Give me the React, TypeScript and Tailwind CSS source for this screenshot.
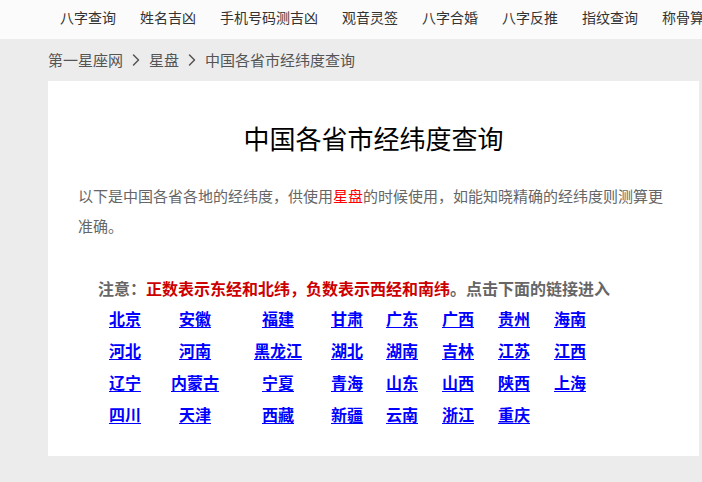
import React from "react";

const nav = ["八字查询", "姓名吉凶", "手机号码测吉凶", "观音灵签", "八字合婚", "八字反推", "指纹查询", "称骨算命", "生肖配对"];

const rows = [
  ["北京", "安徽", "福建", "甘肃", "广东", "广西", "贵州", "海南"],
  ["河北", "河南", "黑龙江", "湖北", "湖南", "吉林", "江苏", "江西"],
  ["辽宁", "内蒙古", "宁夏", "青海", "山东", "山西", "陕西", "上海"],
  ["四川", "天津", "西藏", "新疆", "云南", "浙江", "重庆", ""],
];

function Chevron() {
  return (
    <svg width="20" height="20" viewBox="0 0 24 24" fill="none" stroke="#555" strokeWidth="1.8" strokeLinecap="round" strokeLinejoin="round" className="mx-[3px]">
      <path d="m9 18 6-6-6-6" />
    </svg>
  );
}

export default function App() {
  return (
    <div
      className="min-h-[482px] w-[702px] overflow-hidden bg-[#ececec]"
      style={{ fontFamily: '"Noto Sans CJK SC", "Noto Sans", sans-serif' }}
    >
      <div className="h-[39px] bg-[#fbfbfb] overflow-hidden">
        <div className="flex pl-[48px] whitespace-nowrap text-[14px] leading-[35px] text-[#333]">
          {nav.map((n) => (
            <span key={n} className="px-3 shrink-0">{n}</span>
          ))}
        </div>
      </div>
      <div className="h-[42px] flex items-center pl-[48px] text-[15px] text-[#555]">
        <span>第一星座网</span>
        <Chevron />
        <span>星盘</span>
        <Chevron />
        <span>中国各省市经纬度查询</span>
      </div>
      <div className="ml-[48px] w-[651px] h-[375px] bg-white px-[30px] pt-[37px]">
        <h1 className="text-center text-[26px] leading-[40px] text-black">中国各省市经纬度查询</h1>
        <p className="mt-[23px] text-[15px] leading-[30px] text-[#666]">
          以下是中国各省各地的经纬度，供使用<span className="text-[#ff0000]">星盘</span>的时候使用，如能知晓精确的经纬度则测算更准确。
        </p>
        <div className="mt-[31px] pl-[20px] text-[16px] leading-[32px] font-bold text-[#666]">
          注意：<span className="text-[#cc0000]">正数表示东经和北纬，负数表示西经和南纬</span>。点击下面的链接进入
        </div>
        <div className="ml-[18px] -mt-[2px] grid grid-cols-[58px_82px_84px_54px_56px_56px_56px_56px] text-[16px] leading-[32px] font-bold">
          {rows.flat().map((c, i) => (
            <div key={i} className="text-center">
              {c && <a className="text-[#0000ff] underline underline-offset-2">{c}</a>}
            </div>
          ))}
        </div>
      </div>
    </div>
  );
}
